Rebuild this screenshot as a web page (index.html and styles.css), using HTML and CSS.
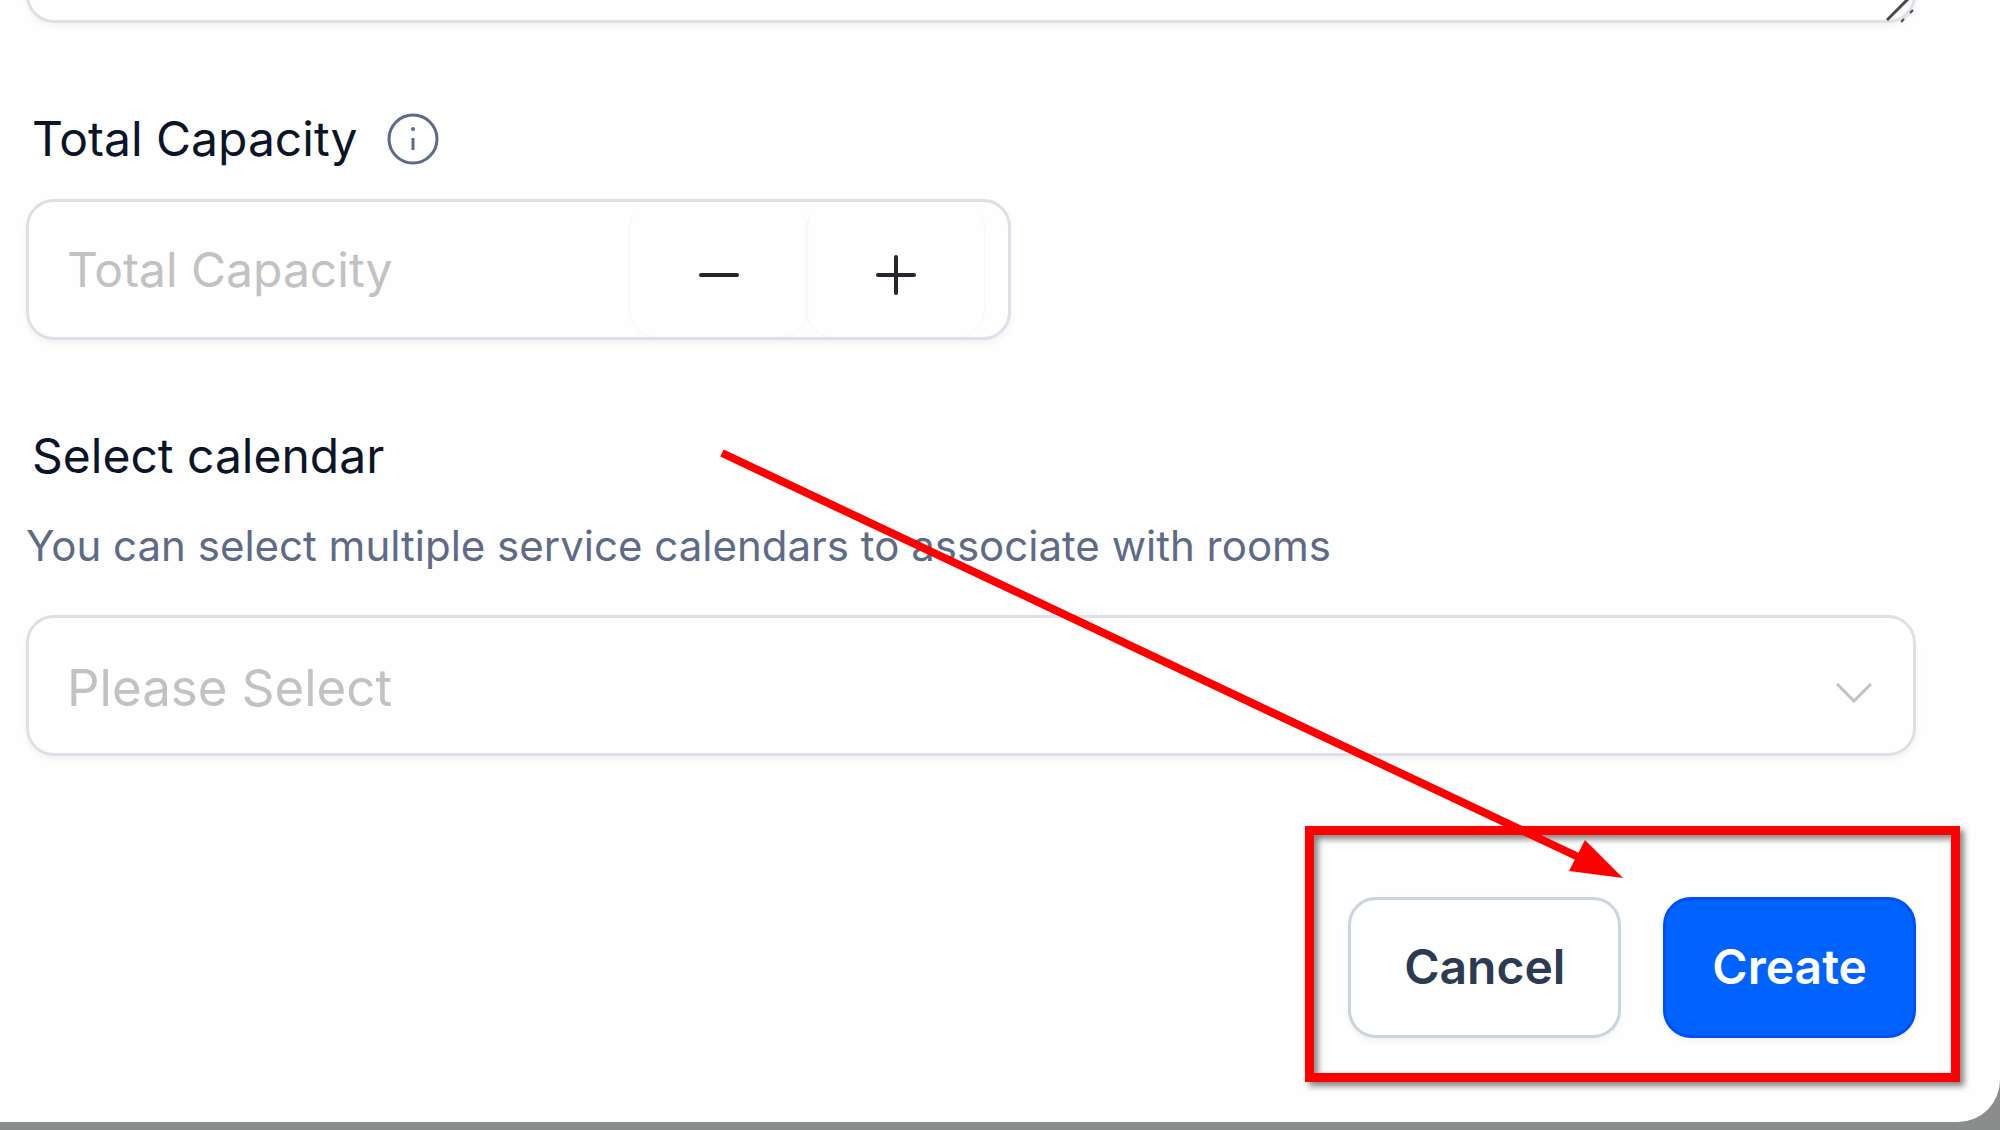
FILE: index.html
```html
<!DOCTYPE html>
<html lang="en">
<head>
  <meta charset="UTF-8" />
  <meta name="viewport" content="width=device-width, initial-scale=1.0"/>
  <title>Create room</title>
  <link rel="stylesheet" href="styles.css">
</head>
<body>
  <form class="modal">

    <div class="textarea-wrap">
      <textarea class="control description" aria-label="Description"></textarea>
      <svg class="resize-grip" viewBox="0 0 30 30" aria-hidden="true">
        <path d="M1 27 L28 0" stroke="#4a4a4a" stroke-width="3"/>
        <path d="M16 28 L26 18" stroke="#e4e4ea" stroke-width="2"/>
        <path d="M15 29 l3 -3 M24 20 l3 -3" stroke="#4a4a4a" stroke-width="2"/>
      </svg>
    </div>

    <div class="label-row">
      <label class="label" for="capacity">Total Capacity</label>
      <svg class="info" viewBox="0 0 52 52" role="img" aria-label="Info">
        <circle cx="26" cy="26" r="24" fill="none" stroke="#5d6b87" stroke-width="3"/>
        <path d="M26 25 V37" stroke="#5d6b87" stroke-width="3"/>
        <circle cx="26" cy="16" r="2" fill="#5d6b87"/>
      </svg>
    </div>
    <div class="control number">
      <input class="number-input" id="capacity" type="text" inputmode="numeric" placeholder="Total Capacity">
      <button class="step" type="button" aria-label="Decrease">
        <svg viewBox="0 0 40 40"><path d="M2 20 H38"/></svg>
      </button>
      <button class="step" type="button" aria-label="Increase">
        <svg viewBox="0 0 40 40"><path d="M2 20 H38 M20 2 V38"/></svg>
      </button>
    </div>

    <div class="label-row">
      <label class="label" for="calendar">Select calendar</label>
    </div>
    <p class="help">You can select multiple service calendars to associate with rooms</p>
    <div class="select-wrap">
      <select class="control select" id="calendar">
        <option>Please Select</option>
      </select>
      <svg class="chevron" viewBox="0 0 36 20" aria-hidden="true">
        <path d="M1 1 L18 18 L35 1"/>
      </svg>
    </div>

    <div class="actions">
      <button class="btn" type="button">Cancel</button>
      <button class="btn primary" type="submit">Create</button>
      <div class="highlight"></div>
    </div>

    <svg class="arrow" viewBox="0 0 904 432" aria-hidden="true">
      <path d="M3 7 L870 416" stroke="#f00" stroke-width="8"/>
      <path d="M866 394 L904 432 L850 425 Z" fill="#f00"/>
    </svg>
  </form>
</body>
</html>
```

FILE: styles.css
```css
:root {
  --border: #dfdfe8;
  --text: #0b1527;
  --muted: #5d6b87;
  --placeholder: #c2c2c2;
  --blue: #0062ff;
  --shadow: 0 3px 6px rgba(16, 24, 40, 0.05);
}

* {
  box-sizing: border-box;
}

body {
  margin: 0;
  min-height: 100vh;
  overflow: hidden;
  background: #8b8d8d;
  color: var(--text);
  font-family: Inter, sans-serif;
  font-size: 48px;
}

input, select, button, textarea {
  font: inherit;
}

.modal {
  position: relative;
  padding: 0 84px 84px 26px;
  background: #fefefe;
  border-radius: 0 0 42px 0;
}

.control {
  display: block;
  width: 100%;
  height: 141px;
  border: 3px solid var(--border);
  border-radius: 28px;
  background: #fefefe;
  box-shadow: var(--shadow);
}

/* scrolled: only the lower edge of the description is visible */
.textarea-wrap {
  position: relative;
  margin-top: -118px;
}

.description {
  resize: none;
}

.resize-grip {
  position: absolute;
  right: 0;
  bottom: 0;
  width: 30px;
  height: 30px;
}

.label-row {
  display: flex;
  align-items: center;
  gap: 29px;
  margin-top: 86px;
  padding-left: 6px;
}

.label {
  line-height: 60px;
}

.info {
  width: 52px;
  height: 52px;
}

.number {
  display: flex;
  width: calc(50% + 40px);
  margin-top: 30px;
  padding-right: 24px;
}

.number-input {
  flex: 1;
  min-width: 0;
  padding: 0 38px;
  border: 0;
  background: none;
}

.number-input::placeholder {
  color: var(--placeholder);
  opacity: 1;
}

.step {
  display: flex;
  align-items: center;
  justify-content: center;
  width: 177px;
  padding: 10px 0 0;
  border: 0;
  border-radius: 28px;
  background: none;
  box-shadow: 0 0 3px rgba(16, 24, 40, 0.07);
  clip-path: inset(12px -3px 0 -3px);
}

.step svg {
  width: 40px;
  height: 40px;
  fill: none;
  stroke: #25272c;
  stroke-width: 4;
  stroke-linecap: round;
}

.help {
  margin: 34px 0 43px;
  color: var(--muted);
  font-size: 42px;
  line-height: 52px;
}

.select-wrap {
  position: relative;
}

.select {
  appearance: none;
  padding: 4px 38px 0;
  color: var(--placeholder);
  font-size: 51px;
}

.chevron {
  position: absolute;
  right: 44px;
  top: 68px;
  width: 36px;
  height: 20px;
  fill: none;
  stroke: #c2c2c2;
  stroke-width: 3;
}

.actions {
  position: relative;
  display: flex;
  justify-content: flex-end;
  gap: 42px;
  margin-top: 141px;
}

.btn {
  height: 141px;
  padding: 0 53px 2px;
  border: 3px solid #cbd3de;
  border-radius: 28px;
  background: #fff;
  box-shadow: var(--shadow);
  color: #2c3b52;
  font-weight: 600;
}

.primary {
  padding: 0 46px 2px;
  border-color: #0050f5;
  background: var(--blue);
  color: #fff;
}

.highlight {
  position: absolute;
  top: -71px;
  right: -44px;
  width: 655px;
  height: 256px;
  border: 9px solid #f00;
  filter: drop-shadow(4px 4px 3px rgba(0, 0, 0, 0.5));
  pointer-events: none;
}

.arrow {
  position: absolute;
  right: 377px;
  bottom: 244px;
  width: 904px;
  height: 432px;
  fill: none;
  pointer-events: none;
}
```
